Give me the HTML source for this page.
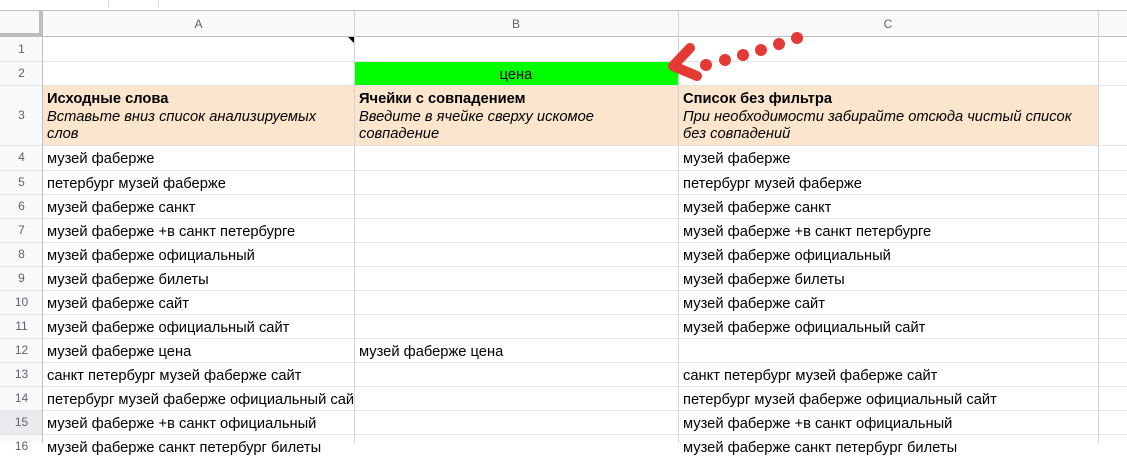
<!DOCTYPE html>
<html><head><meta charset="utf-8"><style>
body{margin:0;width:1127px;height:443px;overflow:hidden;background:#fff;font-family:"Liberation Sans",Arial,sans-serif;font-size:14.7px;color:#000;position:relative}
.a{position:absolute;box-sizing:border-box}
.hl{position:absolute;left:0;width:1127px;height:1px;background:#e2e3e3}
.vl{position:absolute;width:1px;background:#e2e3e3}
.rn{position:absolute;left:0;width:43px;text-align:center;color:#5f6368;font-size:12px}
.t{position:absolute;white-space:nowrap;overflow:hidden;line-height:17px}
</style></head><body>
<div class="a" style="left:108px;top:0;width:1px;height:8px;background:#dadce0"></div>
<div class="a" style="left:158px;top:0;width:1px;height:8px;background:#dadce0"></div>
<div class="a" style="left:0;top:10px;width:1127px;height:1px;background:#c0c0c0"></div>
<div class="a" style="left:0;top:11px;width:1127px;height:26px;background:#f8f9fa;border-bottom:1px solid #c0c0c0"></div>
<div class="a" style="left:0;top:11px;width:43px;height:26px;background:#f8f9fa;border-right:4px solid #bdbdbd;border-bottom:4px solid #bdbdbd"></div>
<div class="t" style="left:43px;top:16px;width:311px;text-align:center;font-size:12px;color:#5f6368">A</div>
<div class="t" style="left:354px;top:16px;width:324px;text-align:center;font-size:12px;color:#5f6368">B</div>
<div class="t" style="left:678px;top:16px;width:420px;text-align:center;font-size:12px;color:#5f6368">C</div>
<div class="a" style="left:0;top:37px;width:43px;height:406px;background:#f8f9fa"></div>
<div class="a" style="left:354px;top:61px;width:324px;height:24px;background:#00ff00"></div>
<div class="a" style="left:43px;top:85px;width:1055px;height:60px;background:#fce5cd"></div>
<div class="a" style="left:0;top:410px;width:43px;height:24px;background:#e8eaed"></div>
<div class="hl" style="top:61px"></div><div class="hl" style="top:85px"></div><div class="hl" style="top:145px"></div>
<div class="hl" style="top:170px"></div><div class="hl" style="top:194px"></div><div class="hl" style="top:218px"></div>
<div class="hl" style="top:242px"></div><div class="hl" style="top:266px"></div><div class="hl" style="top:290px"></div>
<div class="hl" style="top:314px"></div><div class="hl" style="top:338px"></div><div class="hl" style="top:362px"></div>
<div class="hl" style="top:386px"></div><div class="hl" style="top:410px"></div><div class="hl" style="top:434px"></div>
<div class="vl" style="left:354px;top:11px;height:432px;background:#d4d4d4"></div>
<div class="vl" style="left:678px;top:11px;height:432px;background:#d4d4d4"></div>
<div class="vl" style="left:1098px;top:11px;height:432px;background:#d4d4d4"></div>
<div class="vl" style="left:42px;top:37px;height:406px;background:#c0c0c0"></div>
<svg class="a" style="left:346px;top:37px" width="8" height="8"><polygon points="2,0 8,0 8,6" fill="#000"/></svg>
<div class="rn" style="top:42px">1</div><div class="rn" style="top:66px">2</div><div class="rn" style="top:108px">3</div>
<div class="rn" style="top:150px">4</div><div class="rn" style="top:175px">5</div><div class="rn" style="top:199px">6</div>
<div class="rn" style="top:223px">7</div><div class="rn" style="top:247px">8</div><div class="rn" style="top:271px">9</div>
<div class="rn" style="top:295px">10</div><div class="rn" style="top:319px">11</div><div class="rn" style="top:343px">12</div>
<div class="rn" style="top:367px">13</div><div class="rn" style="top:391px">14</div><div class="rn" style="top:415px">15</div>
<div class="rn" style="top:439px">16</div>
<div class="t" style="left:354px;top:67px;width:324px;text-align:center">цена</div>
<div class="a" style="left:47px;top:91px;width:300px;line-height:17.5px"><b>Исходные слова</b><br><i>Вставьте вниз список анализируемых слов</i></div>
<div class="a" style="left:359px;top:91px;width:300px;line-height:17.5px"><b>Ячейки с совпадением</b><br><i>Введите в ячейке сверху искомое совпадение</i></div>
<div class="a" style="left:683px;top:91px;width:413px;line-height:17.5px"><b>Список без фильтра</b><br><i>При необходимости забирайте отсюда чистый список без совпадений</i></div>
<div class="t" style="left:47px;top:151px;width:307px">музей фаберже</div>
<div class="t" style="left:47px;top:176px;width:307px">петербург музей фаберже</div>
<div class="t" style="left:47px;top:200px;width:307px">музей фаберже санкт</div>
<div class="t" style="left:47px;top:224px;width:307px">музей фаберже +в санкт петербурге</div>
<div class="t" style="left:47px;top:248px;width:307px">музей фаберже официальный</div>
<div class="t" style="left:47px;top:272px;width:307px">музей фаберже билеты</div>
<div class="t" style="left:47px;top:296px;width:307px">музей фаберже сайт</div>
<div class="t" style="left:47px;top:320px;width:307px">музей фаберже официальный сайт</div>
<div class="t" style="left:47px;top:344px;width:307px">музей фаберже цена</div>
<div class="t" style="left:47px;top:368px;width:307px">санкт петербург музей фаберже сайт</div>
<div class="t" style="left:47px;top:392px;width:307px">петербург музей фаберже официальный сайт</div>
<div class="t" style="left:47px;top:416px;width:307px">музей фаберже +в санкт официальный</div>
<div class="t" style="left:47px;top:440px;width:307px">музей фаберже санкт петербург билеты</div>
<div class="t" style="left:359px;top:344px;width:318px">музей фаберже цена</div>
<div class="t" style="left:683px;top:151px">музей фаберже</div>
<div class="t" style="left:683px;top:176px">петербург музей фаберже</div>
<div class="t" style="left:683px;top:200px">музей фаберже санкт</div>
<div class="t" style="left:683px;top:224px">музей фаберже +в санкт петербурге</div>
<div class="t" style="left:683px;top:248px">музей фаберже официальный</div>
<div class="t" style="left:683px;top:272px">музей фаберже билеты</div>
<div class="t" style="left:683px;top:296px">музей фаберже сайт</div>
<div class="t" style="left:683px;top:320px">музей фаберже официальный сайт</div>
<div class="t" style="left:683px;top:368px">санкт петербург музей фаберже сайт</div>
<div class="t" style="left:683px;top:392px">петербург музей фаберже официальный сайт</div>
<div class="t" style="left:683px;top:416px">музей фаберже +в санкт официальный</div>
<div class="t" style="left:683px;top:440px">музей фаберже санкт петербург билеты</div>
<svg class="a" style="left:660px;top:30px" width="150" height="60">
<g fill="#e53935">
<circle cx="137" cy="8" r="6"/><circle cx="119" cy="14" r="6"/><circle cx="101" cy="20" r="6"/>
<circle cx="83" cy="25" r="6"/><circle cx="65" cy="30" r="6"/><circle cx="46" cy="35" r="6"/>
</g>
<path d="M30 18 L13 36 L37 46" fill="none" stroke="#e53935" stroke-width="10" stroke-linecap="round" stroke-linejoin="round"/>
</svg>
</body></html>
